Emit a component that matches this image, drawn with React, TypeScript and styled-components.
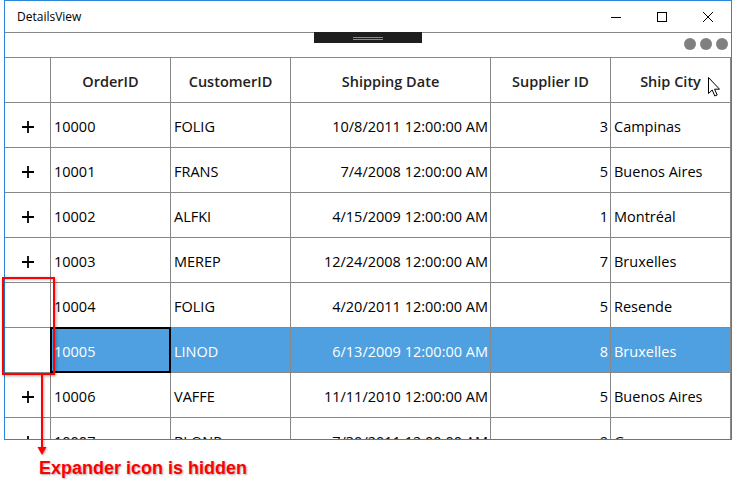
import React from "react";
import styled, { createGlobalStyle } from "styled-components";

const GlobalStyle = createGlobalStyle`
  html, body { margin: 0; padding: 0; background: #fff; }
  body { font-family: "Open Sans", "Noto Sans", sans-serif; color: #000; }
`;

const Page = styled.div`
  position: relative;
  width: 740px;
  height: 483px;
  padding-left: 4px;
  box-sizing: border-box;
  overflow: hidden;
  background: #fff;
`;

const Window = styled.div`
  width: 728px;
  height: 440px;
  box-sizing: border-box;
  border: 1px solid #2b86d9;
  display: flex;
  flex-direction: column;
  overflow: hidden;
  background: #fff;
`;

const TitleBar = styled.div`
  height: 31px;
  flex-shrink: 0;
  display: flex;
  align-items: center;
`;

const Title = styled.div`
  flex: 1;
  padding-left: 12px;
  font-size: 12px;
  color: #000;
`;

const Controls = styled.div`
  display: flex;
  height: 100%;
`;

const CtrlButton = styled.div`
  width: 46px;
  height: 100%;
  display: flex;
  align-items: center;
  justify-content: center;
`;

const Strip = styled.div`
  height: 25px;
  flex-shrink: 0;
  box-sizing: border-box;
  border-top: 1px solid #888;
  display: grid;
  grid-template-columns: 1fr auto 1fr;
`;

const Handle = styled.div`
  grid-column: 2;
  width: 108px;
  height: 11px;
  margin-top: -1px;
  background: #1e1e1e;
  display: flex;
  flex-direction: column;
  align-items: center;
  justify-content: center;
  gap: 1px;
  padding-top: 1px;
  box-sizing: border-box;
`;

const GripLine = styled.div`
  width: 30px;
  height: 1px;
  background: #8a8a8a;
`;

const Dots = styled.div`
  grid-column: 3;
  justify-self: end;
  align-self: start;
  display: flex;
  gap: 4px;
  margin-top: 5px;
  margin-right: 3px;
`;

const Dot = styled.span`
  width: 12px;
  height: 12px;
  border-radius: 50%;
  background: #808080;
`;

const Table = styled.div`
  flex: 1;
  border-top: 1px solid #888;
  overflow: hidden;
`;

const Row = styled.div`
  display: grid;
  grid-template-columns: 46px 120px 120px 200px 120px 120px;
  height: 45px;
`;

type Align = "left" | "right" | "center";

const Cell = styled.div<{ $align?: Align; $selected?: boolean; $header?: boolean; $current?: boolean }>`
  position: relative;
  box-sizing: border-box;
  border-right: 1px solid #888;
  border-bottom: 1px solid #888;
  display: flex;
  align-items: center;
  justify-content: ${(p) =>
    p.$align === "right" ? "flex-end" : p.$align === "center" ? "center" : "flex-start"};
  padding: ${(p) => (p.$header ? "2px 0 0 0" : p.$align === "right" ? "3px 2px 0 0" : "3px 0 0 3px")};
  font-size: 14.5px;
  font-weight: ${(p) => (p.$header ? 600 : 400)};
  color: ${(p) => (p.$selected ? "#fff" : p.$header ? "#222" : "#000")};
  background: ${(p) => (p.$selected ? "#4ea0e0" : "#fff")};
  white-space: nowrap;
  ${(p) =>
    p.$current
      ? `&::after {
    content: "";
    position: absolute;
    left: -1px;
    top: -1px;
    right: -1px;
    bottom: -1px;
    border: 2px solid #000;
    pointer-events: none;
  }`
      : ""}
`;

const ExpanderCell = styled(Cell)`
  justify-content: center;
  padding: 3px 0 0 0;
`;

const Callout = styled.div`
  position: absolute;
  left: 2px;
  top: 277px;
  width: 53px;
  height: 98px;
  box-sizing: border-box;
  border: 2px solid #ff0000;
  box-shadow: 1px 1px 3px rgba(0, 0, 0, 0.35), inset 1px 1px 2px rgba(0, 0, 0, 0.2);
`;

const ArrowSvg = styled.svg`
  position: absolute;
  left: 37px;
  top: 375px;
  filter: drop-shadow(1px 1px 1px rgba(0, 0, 0, 0.3));
`;

const Cursor = styled.svg`
  position: absolute;
  left: 708px;
  top: 77px;
`;

const Note = styled.div`
  margin: 18px 0 0 35px;
  font-family: "Liberation Sans", Arial, sans-serif;
  font-weight: 700;
  font-size: 18px;
  line-height: 20px;
  color: #ff0000;
  text-shadow: 1px 1px 2px rgba(0, 0, 0, 0.35);
`;

const Plus = () => (
  <svg width="12" height="12" viewBox="0 0 12 12">
    <path d="M6 0v12M0 6h12" stroke="#000" strokeWidth="1.8" />
  </svg>
);

type Order = {
  id: string;
  cust: string;
  date: string;
  sup: string;
  city: string;
  expander: boolean;
};

const rows: Order[] = [
  { id: "10000", cust: "FOLIG", date: "10/8/2011 12:00:00 AM", sup: "3", city: "Campinas", expander: true },
  { id: "10001", cust: "FRANS", date: "7/4/2008 12:00:00 AM", sup: "5", city: "Buenos Aires", expander: true },
  { id: "10002", cust: "ALFKI", date: "4/15/2009 12:00:00 AM", sup: "1", city: "Montréal", expander: true },
  { id: "10003", cust: "MEREP", date: "12/24/2008 12:00:00 AM", sup: "7", city: "Bruxelles", expander: true },
  { id: "10004", cust: "FOLIG", date: "4/20/2011 12:00:00 AM", sup: "5", city: "Resende", expander: false },
  { id: "10005", cust: "LINOD", date: "6/13/2009 12:00:00 AM", sup: "8", city: "Bruxelles", expander: false },
  { id: "10006", cust: "VAFFE", date: "11/11/2010 12:00:00 AM", sup: "5", city: "Buenos Aires", expander: true },
  { id: "10007", cust: "BLONP", date: "7/30/2011 12:00:00 AM", sup: "9", city: "Graz", expander: true },
];

const SELECTED = 5;

export default function App() {
  return (
    <Page>
      <GlobalStyle />
      <Window>
        <TitleBar>
          <Title>DetailsView</Title>
          <Controls>
            <CtrlButton>
              <svg width="10" height="10" viewBox="0 0 10 10">
                <path d="M0 5.5h10" stroke="#000" strokeWidth="1" />
              </svg>
            </CtrlButton>
            <CtrlButton>
              <svg width="10" height="10" viewBox="0 0 10 10">
                <rect x="0.5" y="0.5" width="9" height="9" fill="none" stroke="#000" strokeWidth="1" />
              </svg>
            </CtrlButton>
            <CtrlButton>
              <svg width="10" height="10" viewBox="0 0 10 10">
                <path d="M0 0L10 10M10 0L0 10" stroke="#000" strokeWidth="1" />
              </svg>
            </CtrlButton>
          </Controls>
        </TitleBar>
        <Strip>
          <Handle>
            <GripLine />
            <GripLine />
          </Handle>
          <Dots>
            <Dot />
            <Dot />
            <Dot />
          </Dots>
        </Strip>
        <Table>
          <Row>
            <Cell $header />
            <Cell $header $align="center">OrderID</Cell>
            <Cell $header $align="center">CustomerID</Cell>
            <Cell $header $align="center">Shipping Date</Cell>
            <Cell $header $align="center">Supplier ID</Cell>
            <Cell $header $align="center">Ship City</Cell>
          </Row>
          {rows.map((r, i) => {
            const sel = i === SELECTED;
            return (
              <Row key={r.id}>
                <ExpanderCell>{r.expander ? <Plus /> : null}</ExpanderCell>
                <Cell $selected={sel} $current={sel}>{r.id}</Cell>
                <Cell $selected={sel}>{r.cust}</Cell>
                <Cell $selected={sel} $align="right">{r.date}</Cell>
                <Cell $selected={sel} $align="right">{r.sup}</Cell>
                <Cell $selected={sel}>{r.city}</Cell>
              </Row>
            );
          })}
        </Table>
      </Window>
      <Note>Expander icon is hidden</Note>
      <Callout />
      <ArrowSvg width="10" height="82" viewBox="0 0 10 82">
        <path d="M5 0V74" stroke="#ff0000" strokeWidth="2" />
        <path d="M0.5 72L9.5 72L5 80Z" fill="#ff0000" />
      </ArrowSvg>
      <Cursor width="13" height="20" viewBox="0 0 13 20">
        <path
          d="M0.5 0.5L0.5 16.5L4.2 13L6.8 19L9.2 18L6.6 12.2L11.5 12.2Z"
          fill="#fff"
          stroke="#000"
          strokeWidth="1"
          strokeLinejoin="miter"
        />
      </Cursor>
    </Page>
  );
}
